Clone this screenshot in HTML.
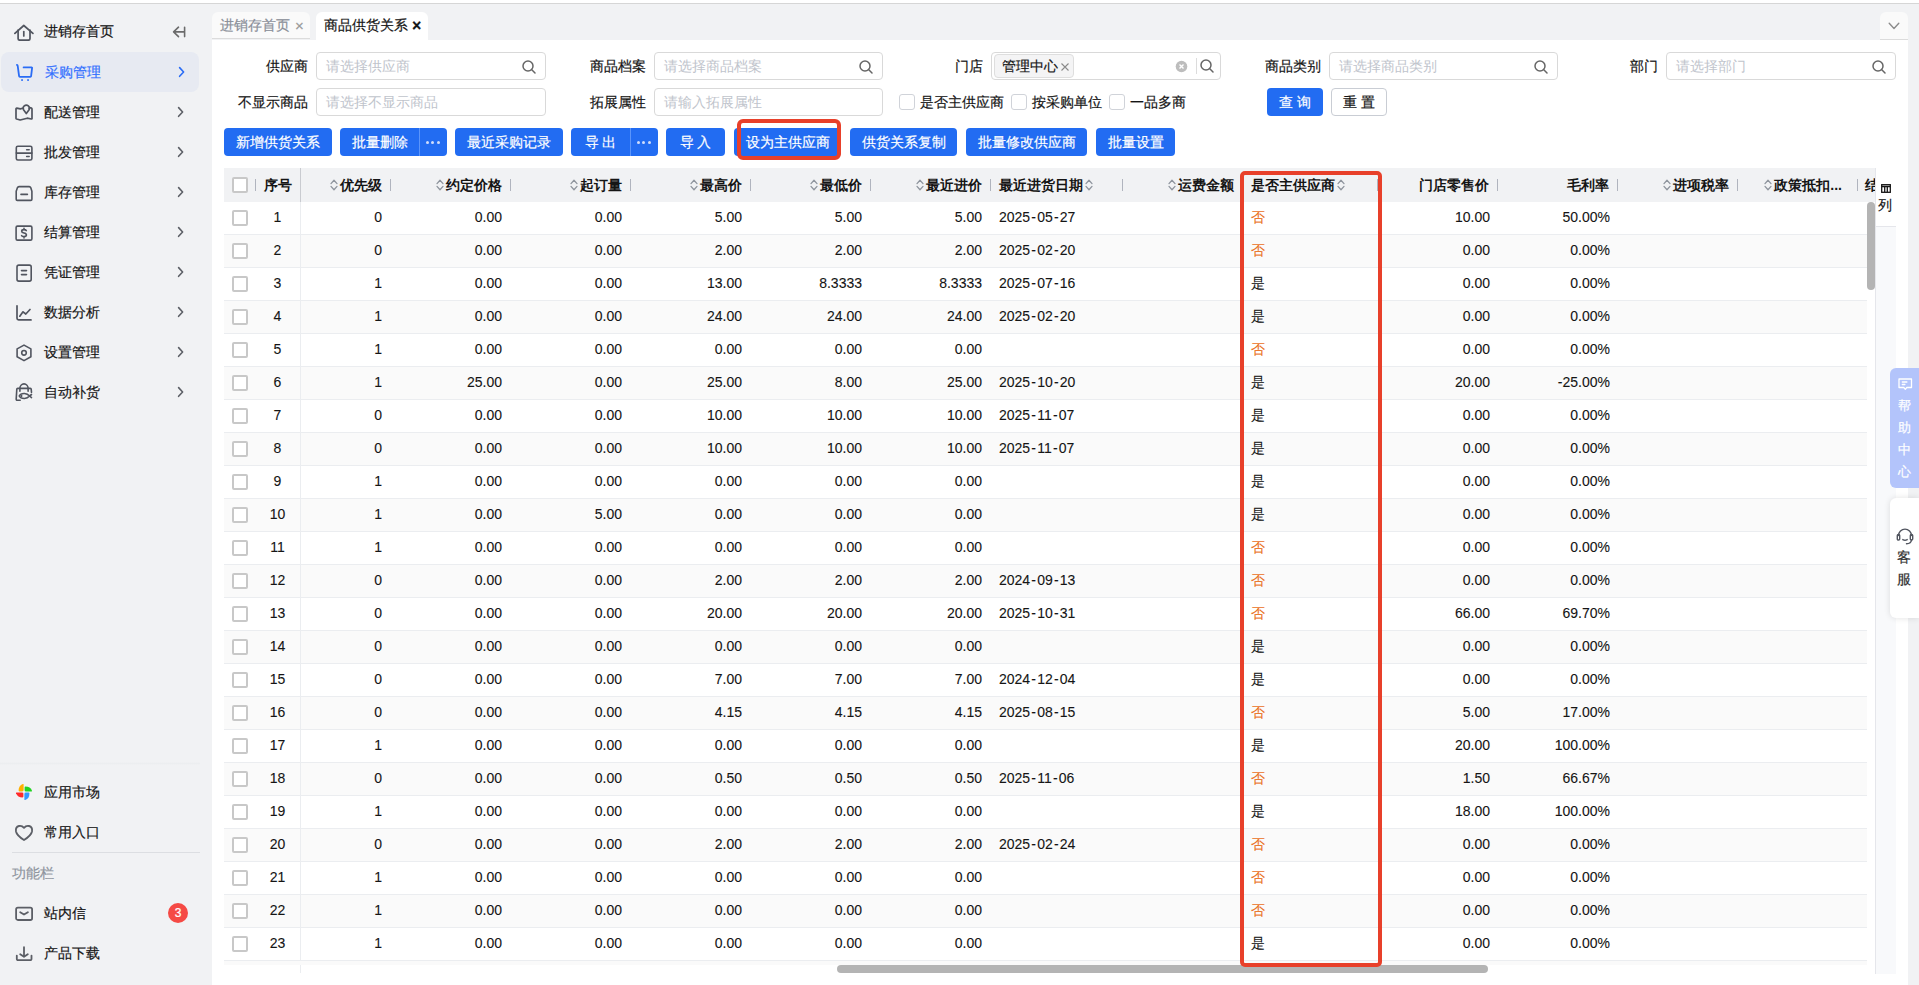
<!DOCTYPE html><html><head><meta charset="utf-8"><style>
*{margin:0;padding:0;box-sizing:border-box}
html,body{width:1919px;height:985px;overflow:hidden}
body{background:#f1f2f4;font-family:"Liberation Sans",sans-serif;font-size:14px;color:#151515;position:relative;-webkit-text-stroke:0.2px}
.a{position:absolute}
.topline{left:0;top:0;width:1919px;height:3px;background:#fff;border-bottom:1px solid #d6d6d6;height:4px}
.nav{left:0;height:40px;width:200px}
.nav .ic{position:absolute;left:14px;top:10px;width:20px;height:20px}
.nav .tx{position:absolute;left:44px;top:0;line-height:40px;font-size:14px;color:#151515;white-space:nowrap}
.nav .ar{position:absolute;left:175px;top:14px;width:12px;height:12px}
.nav.act{background:#e7eaf2;border-radius:8px;left:1px;width:198px}
.nav.act .tx{color:#3370ff}
.panel{left:212px;top:40px;width:1696px;height:945px;background:#fff}
.tab{top:12px;height:27px;border-radius:6px 6px 0 0;white-space:nowrap;line-height:27px;font-size:14px}
.lbl{font-size:14px;color:#151515;text-align:right;line-height:28px;height:28px;white-space:nowrap}
.inp{height:28px;border:1px solid #d9d9d9;border-radius:4px;background:#fff}
.ph{position:absolute;left:9px;top:0;line-height:26px;color:#c0c4cc;font-size:14px;white-space:nowrap;-webkit-text-stroke:0}
.srch{position:absolute;right:9px;top:7px;width:14px;height:14px}
.cb{width:16px;height:16px;border:1px solid #d0d3d9;border-radius:3px;background:#fff}
.tcb{width:16px;height:16px;border:2px solid #c8c8c8;border-radius:2px;background:#fff}
.btn{top:128px;height:28px;background:#226cf2;border-radius:4px;color:#fff;font-size:14px;line-height:28px;text-align:center;white-space:nowrap}
.thd{left:224px;top:168px;width:1652px;height:34px;background:#f1f2f4}
.th{top:168px;height:34px;line-height:34px;font-weight:bold;font-size:14px;color:#151515;white-space:nowrap;-webkit-text-stroke:0}
.sep{top:179px;width:1px;height:12px;background:#b0b4be}
.row{left:224px;width:1643px;height:33px;border-bottom:1px solid #ebedf0}
.td{height:33px;line-height:31px;font-size:14px;color:#151515;white-space:nowrap;-webkit-text-stroke:0.1px}
.no{color:#ea6f1a}
.hy{margin:0 1.2px}
.dot{top:12.5px;width:3px;height:3px;border-radius:2px;background:#d0ddfb}
</style></head><body><div class="a topline"></div>
<div class="a nav" style="top:11px"><svg class="ic" viewBox="0 0 20 20" fill="none" stroke="#51555f" stroke-width="1.7" stroke-linejoin="round" stroke-linecap="round"><path d="M0.9 12.4 L9.8 4.5 L18.9 12.4"/><path d="M4.1 9.2V17.6a1.6 1.6 0 0 0 1.6 1.6H14.4a1.6 1.6 0 0 0 1.6-1.6V9.2"/><path d="M9.8 10.6v4.4"/></svg><div class="tx">进销存首页</div><svg class="ar" style="left:172px;top:13px;width:16px;height:16px" viewBox="0 0 16 16" fill="none" stroke="#6b6b6b" stroke-width="1.6" stroke-linecap="round" stroke-linejoin="round"><path d="M12.6 3.2v9.4M12.2 7.9H1.8M6.5 3.2 L1.6 7.9 L6.5 12.6"/></svg></div>
<div class="a nav act" style="top:52px"><svg class="ic" viewBox="0 0 20 20" fill="none" stroke="#2a6cf5" stroke-width="1.8" stroke-linejoin="round" stroke-linecap="round"><path d="M1.9 2.9 Q2.6 3 2.7 3.8 L4.1 14.2 Q4.2 14.9 4.9 14.9 L15.3 14.8 Q16 14.8 16.1 14.1 L17.1 5.9 Q17.2 5.4 16.6 5.4 H8.6"/><rect x="6.2" y="17.2" width="1.7" height="1.7" fill="#2a6cf5" stroke="none"/><rect x="12.2" y="17.2" width="1.7" height="1.7" fill="#2a6cf5" stroke="none"/></svg><div class="tx">采购管理</div><svg class="ar" viewBox="0 0 12 12" fill="none" stroke="#2a6cf5" stroke-width="1.6" stroke-linecap="round" stroke-linejoin="round"><path d="M3.6 1.6 L7.6 6 L3.6 10.3"/></svg></div>
<div class="a nav" style="top:92px"><svg class="ic" viewBox="0 0 20 20" fill="none" stroke="#51555f" stroke-width="1.7" stroke-linejoin="round" stroke-linecap="round"><path d="M8.6 6.3 L6.3 6.9 L2.8 6.2 Q2 6.1 2 6.9 V16.3 Q2 16.8 2.6 17 L6.2 18 L13.2 16.2 L17.3 17 Q18 17.1 18 16.4 V6.9 Q18 6.4 17.4 6.1 L16.4 5.7 Q15.6 5.4 15.2 6.2"/><path d="M12.3 11.5 L9.7 8 A3.1 3.1 0 1 1 14.9 8 Z"/></svg><div class="tx">配送管理</div><svg class="ar" viewBox="0 0 12 12" fill="none" stroke="#5c5f66" stroke-width="1.6" stroke-linecap="round" stroke-linejoin="round"><path d="M3.6 1.6 L7.6 6 L3.6 10.3"/></svg></div>
<div class="a nav" style="top:132px"><svg class="ic" viewBox="0 0 20 20" fill="none" stroke="#51555f" stroke-width="1.6" stroke-linejoin="round" stroke-linecap="round"><rect x="2.3" y="4.2" width="15.6" height="13.8" rx="1.6"/><path d="M2.3 11.1h15.6"/><path d="M12.6 7.8h2.6M12.6 14.6h2.6" stroke-width="1.5"/></svg><div class="tx">批发管理</div><svg class="ar" viewBox="0 0 12 12" fill="none" stroke="#5c5f66" stroke-width="1.6" stroke-linecap="round" stroke-linejoin="round"><path d="M3.6 1.6 L7.6 6 L3.6 10.3"/></svg></div>
<div class="a nav" style="top:172px"><svg class="ic" viewBox="0 0 20 20" fill="none" stroke="#51555f" stroke-width="1.6" stroke-linejoin="round" stroke-linecap="round"><path d="M5 4.6 H15.3 Q16.3 4.6 16.7 5.6 L17.9 9.2 V17.3 Q17.9 18.4 16.8 18.4 H3.3 Q2.2 18.4 2.2 17.3 V9.2 L3.5 5.6 Q3.9 4.6 5 4.6Z"/><path d="M7 12.4h6.4"/></svg><div class="tx">库存管理</div><svg class="ar" viewBox="0 0 12 12" fill="none" stroke="#5c5f66" stroke-width="1.6" stroke-linecap="round" stroke-linejoin="round"><path d="M3.6 1.6 L7.6 6 L3.6 10.3"/></svg></div>
<div class="a nav" style="top:212px"><svg class="ic" viewBox="0 0 20 20" fill="none" stroke="#51555f" stroke-width="1.6" stroke-linejoin="round" stroke-linecap="round"><rect x="2.1" y="4.1" width="15.8" height="14" rx="1.4"/><path d="M12.3 8.6 Q11.8 7.6 10 7.6 Q7.7 7.6 7.7 9.2 Q7.7 10.6 10 11 Q12.4 11.4 12.4 13 Q12.4 14.6 10 14.6 Q8.1 14.6 7.6 13.6 M10 6.2 V7.6 M10 14.6 V16"/></svg><div class="tx">结算管理</div><svg class="ar" viewBox="0 0 12 12" fill="none" stroke="#5c5f66" stroke-width="1.6" stroke-linecap="round" stroke-linejoin="round"><path d="M3.6 1.6 L7.6 6 L3.6 10.3"/></svg></div>
<div class="a nav" style="top:252px"><svg class="ic" viewBox="0 0 20 20" fill="none" stroke="#51555f" stroke-width="1.6" stroke-linejoin="round" stroke-linecap="round"><rect x="3" y="3.1" width="14.2" height="16" rx="1.8"/><path d="M7.5 8.6h5M7.5 12.6h5"/></svg><div class="tx">凭证管理</div><svg class="ar" viewBox="0 0 12 12" fill="none" stroke="#5c5f66" stroke-width="1.6" stroke-linecap="round" stroke-linejoin="round"><path d="M3.6 1.6 L7.6 6 L3.6 10.3"/></svg></div>
<div class="a nav" style="top:292px"><svg class="ic" viewBox="0 0 20 20" fill="none" stroke="#51555f" stroke-width="1.7" stroke-linejoin="round" stroke-linecap="round"><path d="M3 3.8V16.3a1.6 1.6 0 0 0 1.6 1.6H17"/><path d="M5.8 14.2 L9 9.8 L11.8 12 L16 7.5"/></svg><div class="tx">数据分析</div><svg class="ar" viewBox="0 0 12 12" fill="none" stroke="#5c5f66" stroke-width="1.6" stroke-linecap="round" stroke-linejoin="round"><path d="M3.6 1.6 L7.6 6 L3.6 10.3"/></svg></div>
<div class="a nav" style="top:332px"><svg class="ic" viewBox="0 0 20 20" fill="none" stroke="#51555f" stroke-width="1.6" stroke-linejoin="round"><path d="M10 3.1 L16.9 6.9 V14.8 L10 18.6 L3.1 14.8 V6.9 Z"/><circle cx="10" cy="10.8" r="2.3"/></svg><div class="tx">设置管理</div><svg class="ar" viewBox="0 0 12 12" fill="none" stroke="#5c5f66" stroke-width="1.6" stroke-linecap="round" stroke-linejoin="round"><path d="M3.6 1.6 L7.6 6 L3.6 10.3"/></svg></div>
<div class="a nav" style="top:372px"><svg class="ic" viewBox="0 0 20 20" fill="none" stroke="#51555f" stroke-width="1.6" stroke-linejoin="round" stroke-linecap="round"><path d="M5.9 9.3V6.3a4.1 4.4 0 0 1 8.2 0V9.3"/><path d="M6.2 18.2H3.2Q2.1 18.2 2.2 17.1L2.8 7.2Q2.9 6.4 3.7 6.4H16.3Q17.1 6.4 17.2 7.2L17.5 10.4"/><path d="M15.6 14 Q13.5 11.8 10.5 11.5 Q6.5 11.3 5.2 14 Q6.5 16.6 10.5 16.5 Q13.5 16.2 15.6 14 Z M15.6 14 L17.5 12.5 M15.6 14 L17.5 15.6"/><path d="M7.5 13.5v1"/></svg><div class="tx">自动补货</div><svg class="ar" viewBox="0 0 12 12" fill="none" stroke="#5c5f66" stroke-width="1.6" stroke-linecap="round" stroke-linejoin="round"><path d="M3.6 1.6 L7.6 6 L3.6 10.3"/></svg></div>
<div class="a" style="left:0;top:762px;width:200px;height:3px;background:linear-gradient(#f1f2f4,#eceef0,#f1f2f4)"></div>
<div class="a nav" style="top:772px"><svg class="ic" viewBox="0 0 20 20"><g id="pt"><path d="M9.6 8 V2.6 Q9.6 1.7 8.8 2 Q4.6 3.6 4.6 8.6 Q4.6 9.4 5.4 9.4 H8.2 Q9.6 9.4 9.6 8 Z" fill="#ffb000"/></g><path d="M9.6 8 V2.6 Q9.6 1.7 8.8 2 Q4.6 3.6 4.6 8.6 Q4.6 9.4 5.4 9.4 H8.2 Q9.6 9.4 9.6 8 Z" fill="#22d322" transform="rotate(90 10 10)"/><path d="M9.6 8 V2.6 Q9.6 1.7 8.8 2 Q4.6 3.6 4.6 8.6 Q4.6 9.4 5.4 9.4 H8.2 Q9.6 9.4 9.6 8 Z" fill="#3399ff" transform="rotate(180 10 10)"/><path d="M9.6 8 V2.6 Q9.6 1.7 8.8 2 Q4.6 3.6 4.6 8.6 Q4.6 9.4 5.4 9.4 H8.2 Q9.6 9.4 9.6 8 Z" fill="#ff2a2a" transform="rotate(270 10 10)"/></svg><div class="tx">应用市场</div></div>
<div class="a nav" style="top:812px"><svg class="ic" viewBox="0 0 20 20" fill="none" stroke="#5c5f66" stroke-width="1.8" stroke-linejoin="round"><path d="M10 5.8 C8.5 4 6.5 3.7 5 4 C2.5 4.6 1.6 7 2 9.5 C2.6 12.5 6 15.5 10 18 C14 15.5 17.4 12.5 18 9.5 C18.4 7 17.5 4.6 15 4 C13.5 3.7 11.5 4 10 5.8Z"/></svg><div class="tx">常用入口</div></div>
<div class="a" style="left:12px;top:852px;width:188px;height:1px;background:#dcdee2"></div>
<div class="a" style="left:12px;top:863px;line-height:20px;font-size:14px;color:#8f959e">功能栏</div>
<div class="a nav" style="top:893px"><svg class="ic" viewBox="0 0 20 20" fill="none" stroke="#5c5f66" stroke-width="1.8" stroke-linejoin="round"><rect x="2.1" y="4.6" width="16" height="12.4" rx="1.8"/><path d="M6.2 9.2 L10 11.6 L13.9 9.2" stroke-linecap="round"/></svg><div class="tx">站内信</div><div class="a" style="left:168px;top:10px;width:20px;height:20px;border-radius:10px;background:#f54a45;color:#fff;font-size:12px;line-height:20px;text-align:center">3</div></div>
<div class="a nav" style="top:933px"><svg class="ic" viewBox="0 0 20 20" fill="none" stroke="#5c5f66" stroke-width="1.8" stroke-linejoin="round" stroke-linecap="round"><path d="M10 4.2v9.4M6.2 11.2l3.8 2.6 3.8-2.6"/><path d="M2.8 12.6v3.4a1.2 1.2 0 0 0 1.2 1.2h12.3a1.2 1.2 0 0 0 1.2-1.2v-3.4"/></svg><div class="tx">产品下载</div></div>
<div class="a panel"></div>
<div class="a tab" style="left:212px;width:98px;background:#fafafa;border-bottom:1px solid #dcdcdc;color:#8a8f99"><span class="a" style="left:8px;top:0">进销存首页</span><span class="a" style="left:83px;top:0;font-size:15px;color:#999">×</span></div>
<div class="a tab" style="left:316px;width:112px;height:28px;background:#fff;color:#151515"><span class="a" style="left:8px;top:0">商品供货关系</span><span class="a" style="left:96px;top:0;font-size:16px;font-weight:bold;color:#151515">×</span></div>
<div class="a tab" style="left:1880px;width:28px;height:28px;background:#fafafa;border-bottom:1px solid #dcdcdc"><svg class="a" style="left:8px;top:10px" width="12" height="8" viewBox="0 0 12 8" fill="none" stroke="#8c8c8c" stroke-width="1.4" stroke-linecap="round" stroke-linejoin="round"><path d="M1.2 1.3 L6 6.4 L10.8 1.3"/></svg></div>
<div class="a lbl" style="left:108px;top:52px;width:200px">供应商</div>
<div class="a inp" style="left:316px;top:52px;width:230px"><span class="ph">请选择供应商</span><svg class="srch" viewBox="0 0 14 14" fill="none" stroke="#666" stroke-width="1.5" stroke-linecap="round"><circle cx="6" cy="6" r="5"/><path d="M9.8 9.8 L13 13"/></svg></div>
<div class="a lbl" style="left:446px;top:52px;width:200px">商品档案</div>
<div class="a inp" style="left:654px;top:52px;width:229px"><span class="ph">请选择商品档案</span><svg class="srch" viewBox="0 0 14 14" fill="none" stroke="#666" stroke-width="1.5" stroke-linecap="round"><circle cx="6" cy="6" r="5"/><path d="M9.8 9.8 L13 13"/></svg></div>
<div class="a lbl" style="left:1121px;top:52px;width:200px">商品类别</div>
<div class="a inp" style="left:1329px;top:52px;width:229px"><span class="ph">请选择商品类别</span><svg class="srch" viewBox="0 0 14 14" fill="none" stroke="#666" stroke-width="1.5" stroke-linecap="round"><circle cx="6" cy="6" r="5"/><path d="M9.8 9.8 L13 13"/></svg></div>
<div class="a lbl" style="left:1458px;top:52px;width:200px">部门</div>
<div class="a inp" style="left:1666px;top:52px;width:230px"><span class="ph">请选择部门</span><svg class="srch" viewBox="0 0 14 14" fill="none" stroke="#666" stroke-width="1.5" stroke-linecap="round"><circle cx="6" cy="6" r="5"/><path d="M9.8 9.8 L13 13"/></svg></div>
<div class="a lbl" style="left:108px;top:88px;width:200px">不显示商品</div>
<div class="a inp" style="left:316px;top:88px;width:230px"><span class="ph">请选择不显示商品</span></div>
<div class="a lbl" style="left:446px;top:88px;width:200px">拓展属性</div>
<div class="a inp" style="left:654px;top:88px;width:229px"><span class="ph">请输入拓展属性</span></div>
<div class="a lbl" style="left:783px;top:52px;width:200px">门店</div>
<div class="a inp" style="left:991px;top:52px;width:230px"><div class="a" style="left:2px;top:1px;width:80px;height:24px;background:#f4f4f5;border:1px solid #dedede;border-radius:4px;line-height:22px;font-size:14px;color:#151515;padding-left:7px;white-space:nowrap">管理中心<svg style="position:absolute;left:66px;top:8px" width="8" height="8" viewBox="0 0 8 8" stroke="#8a8a8a" stroke-width="1.1"><path d="M.5 .5 L7.5 7.5 M7.5 .5 L.5 7.5"/></svg></div><svg class="a" style="left:183px;top:7px" width="13" height="13" viewBox="0 0 13 13"><circle cx="6.5" cy="6.5" r="5.8" fill="#bdbdbd"/><path d="M4.5 4.5 L8.5 8.5 M8.5 4.5 L4.5 8.5" stroke="#fff" stroke-width="1.4"/></svg><div class="a" style="left:204px;top:5px;width:1px;height:16px;background:#dcdcdc"></div><svg class="srch" style="right:6px;top:6px" viewBox="0 0 14 14" fill="none" stroke="#666" stroke-width="1.5" stroke-linecap="round"><circle cx="6" cy="6" r="5"/><path d="M9.8 9.8 L13 13"/></svg></div>
<div class="a cb" style="left:899px;top:94px"></div><div class="a" style="left:920px;top:92px;line-height:20px;white-space:nowrap">是否主供应商</div>
<div class="a cb" style="left:1011px;top:94px"></div><div class="a" style="left:1032px;top:92px;line-height:20px;white-space:nowrap">按采购单位</div>
<div class="a cb" style="left:1109px;top:94px"></div><div class="a" style="left:1130px;top:92px;line-height:20px;white-space:nowrap">一品多商</div>
<div class="a btn" style="left:1267px;top:88px;width:56px;letter-spacing:4px;padding-left:4px">查询</div>
<div class="a btn" style="left:1331px;top:88px;width:56px;background:#fff;border:1px solid #c9cdd4;color:#151515;line-height:26px;letter-spacing:4px;padding-left:4px">重置</div>
<div class="a btn" style="left:224px;width:108px">新增供货关系</div>
<div class="a btn" style="left:340px;width:107px"><span class="a" style="left:0;top:0;width:79px">批量删除</span><span class="a" style="left:79px;top:0;width:1px;height:28px;background:#5b95fb"></span><span class="a dot" style="left:86px"></span><span class="a dot" style="left:91.3px"></span><span class="a dot" style="left:96.5px"></span></div>
<div class="a btn" style="left:455px;width:108px">最近采购记录</div>
<div class="a btn" style="left:571px;width:87px"><span class="a" style="left:0;top:0;width:59px">导 出</span><span class="a" style="left:59px;top:0;width:1px;height:28px;background:#5b95fb"></span><span class="a dot" style="left:66px"></span><span class="a dot" style="left:71.3px"></span><span class="a dot" style="left:76.5px"></span></div>
<div class="a btn" style="left:666px;width:59px">导 入</div>
<div class="a btn" style="left:734px;width:107px">设为主供应商</div>
<div class="a btn" style="left:850px;width:107px">供货关系复制</div>
<div class="a btn" style="left:966px;width:121px">批量修改供应商</div>
<div class="a btn" style="left:1096px;width:79px">批量设置</div>
<div class="a thd"></div>
<div class="a tcb" style="left:232px;top:177px"></div><div class="a sep" style="left:255px"></div><div class="a th" style="left:255px;width:45px;text-align:center">序号</div><div class="a th" style="left:300px;width:82px;text-align:right"><svg width="8" height="12" viewBox="0 0 8 12" fill="none" stroke="#8f959e" stroke-width="1.3" stroke-linecap="round" stroke-linejoin="round" style="vertical-align:-1px;margin-right:2.5px"><path d="M1 4.6 L4 1.2 L7 4.6M1 7.4 L4 10.8 L7 7.4"/></svg>优先级</div><div class="a sep" style="left:390px"></div><div class="a th" style="left:390px;width:112px;text-align:right"><svg width="8" height="12" viewBox="0 0 8 12" fill="none" stroke="#8f959e" stroke-width="1.3" stroke-linecap="round" stroke-linejoin="round" style="vertical-align:-1px;margin-right:2.5px"><path d="M1 4.6 L4 1.2 L7 4.6M1 7.4 L4 10.8 L7 7.4"/></svg>约定价格</div><div class="a sep" style="left:510px"></div><div class="a th" style="left:510px;width:112px;text-align:right"><svg width="8" height="12" viewBox="0 0 8 12" fill="none" stroke="#8f959e" stroke-width="1.3" stroke-linecap="round" stroke-linejoin="round" style="vertical-align:-1px;margin-right:2.5px"><path d="M1 4.6 L4 1.2 L7 4.6M1 7.4 L4 10.8 L7 7.4"/></svg>起订量</div><div class="a sep" style="left:630px"></div><div class="a th" style="left:630px;width:112px;text-align:right"><svg width="8" height="12" viewBox="0 0 8 12" fill="none" stroke="#8f959e" stroke-width="1.3" stroke-linecap="round" stroke-linejoin="round" style="vertical-align:-1px;margin-right:2.5px"><path d="M1 4.6 L4 1.2 L7 4.6M1 7.4 L4 10.8 L7 7.4"/></svg>最高价</div><div class="a sep" style="left:750px"></div><div class="a th" style="left:750px;width:112px;text-align:right"><svg width="8" height="12" viewBox="0 0 8 12" fill="none" stroke="#8f959e" stroke-width="1.3" stroke-linecap="round" stroke-linejoin="round" style="vertical-align:-1px;margin-right:2.5px"><path d="M1 4.6 L4 1.2 L7 4.6M1 7.4 L4 10.8 L7 7.4"/></svg>最低价</div><div class="a sep" style="left:870px"></div><div class="a th" style="left:870px;width:112px;text-align:right"><svg width="8" height="12" viewBox="0 0 8 12" fill="none" stroke="#8f959e" stroke-width="1.3" stroke-linecap="round" stroke-linejoin="round" style="vertical-align:-1px;margin-right:2.5px"><path d="M1 4.6 L4 1.2 L7 4.6M1 7.4 L4 10.8 L7 7.4"/></svg>最近进价</div><div class="a sep" style="left:990px"></div><div class="a th" style="left:999px;width:123px;text-align:left">最近进货日期<svg width="8" height="12" viewBox="0 0 8 12" fill="none" stroke="#8f959e" stroke-width="1.3" stroke-linecap="round" stroke-linejoin="round" style="vertical-align:-1px;margin-left:2px"><path d="M1 4.6 L4 1.2 L7 4.6M1 7.4 L4 10.8 L7 7.4"/></svg></div><div class="a sep" style="left:1122px"></div><div class="a th" style="left:1122px;width:112px;text-align:right"><svg width="8" height="12" viewBox="0 0 8 12" fill="none" stroke="#8f959e" stroke-width="1.3" stroke-linecap="round" stroke-linejoin="round" style="vertical-align:-1px;margin-right:2.5px"><path d="M1 4.6 L4 1.2 L7 4.6M1 7.4 L4 10.8 L7 7.4"/></svg>运费金额</div><div class="a sep" style="left:1242px"></div><div class="a th" style="left:1251px;width:126px;text-align:left">是否主供应商<svg width="8" height="12" viewBox="0 0 8 12" fill="none" stroke="#8f959e" stroke-width="1.3" stroke-linecap="round" stroke-linejoin="round" style="vertical-align:-1px;margin-left:2px"><path d="M1 4.6 L4 1.2 L7 4.6M1 7.4 L4 10.8 L7 7.4"/></svg></div><div class="a sep" style="left:1377px"></div><div class="a th" style="left:1377px;width:112px;text-align:right">门店零售价</div><div class="a sep" style="left:1497px"></div><div class="a th" style="left:1497px;width:112px;text-align:right">毛利率</div><div class="a sep" style="left:1617px"></div><div class="a th" style="left:1617px;width:112px;text-align:right"><svg width="8" height="12" viewBox="0 0 8 12" fill="none" stroke="#8f959e" stroke-width="1.3" stroke-linecap="round" stroke-linejoin="round" style="vertical-align:-1px;margin-right:2.5px"><path d="M1 4.6 L4 1.2 L7 4.6M1 7.4 L4 10.8 L7 7.4"/></svg>进项税率</div><div class="a sep" style="left:1737px"></div><div class="a th" style="left:1737px;width:105px;text-align:right"><svg width="8" height="12" viewBox="0 0 8 12" fill="none" stroke="#8f959e" stroke-width="1.3" stroke-linecap="round" stroke-linejoin="round" style="vertical-align:-1px;margin-right:2.5px"><path d="M1 4.6 L4 1.2 L7 4.6M1 7.4 L4 10.8 L7 7.4"/></svg>政策抵扣...</div><div class="a sep" style="left:1857px"></div><div class="a th" style="left:1857px;width:18px;padding-left:8px;overflow:hidden">结算方式</div>
<div class="a" style="left:300px;top:168px;width:1px;height:34px;background:#c9cbd0"></div>
<div class="a row" style="top:202px;background:#fff"></div><div class="a tcb" style="left:232px;top:210px"></div><div class="a td" style="left:255px;top:202px;width:45px;text-align:center">1</div><div class="a td" style="left:300px;top:202px;width:82px;text-align:right">0</div><div class="a td" style="left:390px;top:202px;width:112px;text-align:right">0.00</div><div class="a td" style="left:510px;top:202px;width:112px;text-align:right">0.00</div><div class="a td" style="left:630px;top:202px;width:112px;text-align:right">5.00</div><div class="a td" style="left:750px;top:202px;width:112px;text-align:right">5.00</div><div class="a td" style="left:870px;top:202px;width:112px;text-align:right">5.00</div><div class="a td" style="left:999px;top:202px">2025<span class="hy">-</span>05<span class="hy">-</span>27</div><div class="a td no" style="left:1251px;top:202px">否</div><div class="a td" style="left:1377px;top:202px;width:113px;text-align:right">10.00</div><div class="a td" style="left:1497px;top:202px;width:113px;text-align:right">50.00%</div><div class="a row" style="top:235px;background:#fafafa"></div><div class="a tcb" style="left:232px;top:243px"></div><div class="a td" style="left:255px;top:235px;width:45px;text-align:center">2</div><div class="a td" style="left:300px;top:235px;width:82px;text-align:right">0</div><div class="a td" style="left:390px;top:235px;width:112px;text-align:right">0.00</div><div class="a td" style="left:510px;top:235px;width:112px;text-align:right">0.00</div><div class="a td" style="left:630px;top:235px;width:112px;text-align:right">2.00</div><div class="a td" style="left:750px;top:235px;width:112px;text-align:right">2.00</div><div class="a td" style="left:870px;top:235px;width:112px;text-align:right">2.00</div><div class="a td" style="left:999px;top:235px">2025<span class="hy">-</span>02<span class="hy">-</span>20</div><div class="a td no" style="left:1251px;top:235px">否</div><div class="a td" style="left:1377px;top:235px;width:113px;text-align:right">0.00</div><div class="a td" style="left:1497px;top:235px;width:113px;text-align:right">0.00%</div><div class="a row" style="top:268px;background:#fff"></div><div class="a tcb" style="left:232px;top:276px"></div><div class="a td" style="left:255px;top:268px;width:45px;text-align:center">3</div><div class="a td" style="left:300px;top:268px;width:82px;text-align:right">1</div><div class="a td" style="left:390px;top:268px;width:112px;text-align:right">0.00</div><div class="a td" style="left:510px;top:268px;width:112px;text-align:right">0.00</div><div class="a td" style="left:630px;top:268px;width:112px;text-align:right">13.00</div><div class="a td" style="left:750px;top:268px;width:112px;text-align:right">8.3333</div><div class="a td" style="left:870px;top:268px;width:112px;text-align:right">8.3333</div><div class="a td" style="left:999px;top:268px">2025<span class="hy">-</span>07<span class="hy">-</span>16</div><div class="a td" style="left:1251px;top:268px">是</div><div class="a td" style="left:1377px;top:268px;width:113px;text-align:right">0.00</div><div class="a td" style="left:1497px;top:268px;width:113px;text-align:right">0.00%</div><div class="a row" style="top:301px;background:#fafafa"></div><div class="a tcb" style="left:232px;top:309px"></div><div class="a td" style="left:255px;top:301px;width:45px;text-align:center">4</div><div class="a td" style="left:300px;top:301px;width:82px;text-align:right">1</div><div class="a td" style="left:390px;top:301px;width:112px;text-align:right">0.00</div><div class="a td" style="left:510px;top:301px;width:112px;text-align:right">0.00</div><div class="a td" style="left:630px;top:301px;width:112px;text-align:right">24.00</div><div class="a td" style="left:750px;top:301px;width:112px;text-align:right">24.00</div><div class="a td" style="left:870px;top:301px;width:112px;text-align:right">24.00</div><div class="a td" style="left:999px;top:301px">2025<span class="hy">-</span>02<span class="hy">-</span>20</div><div class="a td" style="left:1251px;top:301px">是</div><div class="a td" style="left:1377px;top:301px;width:113px;text-align:right">0.00</div><div class="a td" style="left:1497px;top:301px;width:113px;text-align:right">0.00%</div><div class="a row" style="top:334px;background:#fff"></div><div class="a tcb" style="left:232px;top:342px"></div><div class="a td" style="left:255px;top:334px;width:45px;text-align:center">5</div><div class="a td" style="left:300px;top:334px;width:82px;text-align:right">1</div><div class="a td" style="left:390px;top:334px;width:112px;text-align:right">0.00</div><div class="a td" style="left:510px;top:334px;width:112px;text-align:right">0.00</div><div class="a td" style="left:630px;top:334px;width:112px;text-align:right">0.00</div><div class="a td" style="left:750px;top:334px;width:112px;text-align:right">0.00</div><div class="a td" style="left:870px;top:334px;width:112px;text-align:right">0.00</div><div class="a td no" style="left:1251px;top:334px">否</div><div class="a td" style="left:1377px;top:334px;width:113px;text-align:right">0.00</div><div class="a td" style="left:1497px;top:334px;width:113px;text-align:right">0.00%</div><div class="a row" style="top:367px;background:#fafafa"></div><div class="a tcb" style="left:232px;top:375px"></div><div class="a td" style="left:255px;top:367px;width:45px;text-align:center">6</div><div class="a td" style="left:300px;top:367px;width:82px;text-align:right">1</div><div class="a td" style="left:390px;top:367px;width:112px;text-align:right">25.00</div><div class="a td" style="left:510px;top:367px;width:112px;text-align:right">0.00</div><div class="a td" style="left:630px;top:367px;width:112px;text-align:right">25.00</div><div class="a td" style="left:750px;top:367px;width:112px;text-align:right">8.00</div><div class="a td" style="left:870px;top:367px;width:112px;text-align:right">25.00</div><div class="a td" style="left:999px;top:367px">2025<span class="hy">-</span>10<span class="hy">-</span>20</div><div class="a td" style="left:1251px;top:367px">是</div><div class="a td" style="left:1377px;top:367px;width:113px;text-align:right">20.00</div><div class="a td" style="left:1497px;top:367px;width:113px;text-align:right">-25.00%</div><div class="a row" style="top:400px;background:#fff"></div><div class="a tcb" style="left:232px;top:408px"></div><div class="a td" style="left:255px;top:400px;width:45px;text-align:center">7</div><div class="a td" style="left:300px;top:400px;width:82px;text-align:right">0</div><div class="a td" style="left:390px;top:400px;width:112px;text-align:right">0.00</div><div class="a td" style="left:510px;top:400px;width:112px;text-align:right">0.00</div><div class="a td" style="left:630px;top:400px;width:112px;text-align:right">10.00</div><div class="a td" style="left:750px;top:400px;width:112px;text-align:right">10.00</div><div class="a td" style="left:870px;top:400px;width:112px;text-align:right">10.00</div><div class="a td" style="left:999px;top:400px">2025<span class="hy">-</span>11<span class="hy">-</span>07</div><div class="a td" style="left:1251px;top:400px">是</div><div class="a td" style="left:1377px;top:400px;width:113px;text-align:right">0.00</div><div class="a td" style="left:1497px;top:400px;width:113px;text-align:right">0.00%</div><div class="a row" style="top:433px;background:#fafafa"></div><div class="a tcb" style="left:232px;top:441px"></div><div class="a td" style="left:255px;top:433px;width:45px;text-align:center">8</div><div class="a td" style="left:300px;top:433px;width:82px;text-align:right">0</div><div class="a td" style="left:390px;top:433px;width:112px;text-align:right">0.00</div><div class="a td" style="left:510px;top:433px;width:112px;text-align:right">0.00</div><div class="a td" style="left:630px;top:433px;width:112px;text-align:right">10.00</div><div class="a td" style="left:750px;top:433px;width:112px;text-align:right">10.00</div><div class="a td" style="left:870px;top:433px;width:112px;text-align:right">10.00</div><div class="a td" style="left:999px;top:433px">2025<span class="hy">-</span>11<span class="hy">-</span>07</div><div class="a td" style="left:1251px;top:433px">是</div><div class="a td" style="left:1377px;top:433px;width:113px;text-align:right">0.00</div><div class="a td" style="left:1497px;top:433px;width:113px;text-align:right">0.00%</div><div class="a row" style="top:466px;background:#fff"></div><div class="a tcb" style="left:232px;top:474px"></div><div class="a td" style="left:255px;top:466px;width:45px;text-align:center">9</div><div class="a td" style="left:300px;top:466px;width:82px;text-align:right">1</div><div class="a td" style="left:390px;top:466px;width:112px;text-align:right">0.00</div><div class="a td" style="left:510px;top:466px;width:112px;text-align:right">0.00</div><div class="a td" style="left:630px;top:466px;width:112px;text-align:right">0.00</div><div class="a td" style="left:750px;top:466px;width:112px;text-align:right">0.00</div><div class="a td" style="left:870px;top:466px;width:112px;text-align:right">0.00</div><div class="a td" style="left:1251px;top:466px">是</div><div class="a td" style="left:1377px;top:466px;width:113px;text-align:right">0.00</div><div class="a td" style="left:1497px;top:466px;width:113px;text-align:right">0.00%</div><div class="a row" style="top:499px;background:#fafafa"></div><div class="a tcb" style="left:232px;top:507px"></div><div class="a td" style="left:255px;top:499px;width:45px;text-align:center">10</div><div class="a td" style="left:300px;top:499px;width:82px;text-align:right">1</div><div class="a td" style="left:390px;top:499px;width:112px;text-align:right">0.00</div><div class="a td" style="left:510px;top:499px;width:112px;text-align:right">5.00</div><div class="a td" style="left:630px;top:499px;width:112px;text-align:right">0.00</div><div class="a td" style="left:750px;top:499px;width:112px;text-align:right">0.00</div><div class="a td" style="left:870px;top:499px;width:112px;text-align:right">0.00</div><div class="a td" style="left:1251px;top:499px">是</div><div class="a td" style="left:1377px;top:499px;width:113px;text-align:right">0.00</div><div class="a td" style="left:1497px;top:499px;width:113px;text-align:right">0.00%</div><div class="a row" style="top:532px;background:#fff"></div><div class="a tcb" style="left:232px;top:540px"></div><div class="a td" style="left:255px;top:532px;width:45px;text-align:center">11</div><div class="a td" style="left:300px;top:532px;width:82px;text-align:right">1</div><div class="a td" style="left:390px;top:532px;width:112px;text-align:right">0.00</div><div class="a td" style="left:510px;top:532px;width:112px;text-align:right">0.00</div><div class="a td" style="left:630px;top:532px;width:112px;text-align:right">0.00</div><div class="a td" style="left:750px;top:532px;width:112px;text-align:right">0.00</div><div class="a td" style="left:870px;top:532px;width:112px;text-align:right">0.00</div><div class="a td no" style="left:1251px;top:532px">否</div><div class="a td" style="left:1377px;top:532px;width:113px;text-align:right">0.00</div><div class="a td" style="left:1497px;top:532px;width:113px;text-align:right">0.00%</div><div class="a row" style="top:565px;background:#fafafa"></div><div class="a tcb" style="left:232px;top:573px"></div><div class="a td" style="left:255px;top:565px;width:45px;text-align:center">12</div><div class="a td" style="left:300px;top:565px;width:82px;text-align:right">0</div><div class="a td" style="left:390px;top:565px;width:112px;text-align:right">0.00</div><div class="a td" style="left:510px;top:565px;width:112px;text-align:right">0.00</div><div class="a td" style="left:630px;top:565px;width:112px;text-align:right">2.00</div><div class="a td" style="left:750px;top:565px;width:112px;text-align:right">2.00</div><div class="a td" style="left:870px;top:565px;width:112px;text-align:right">2.00</div><div class="a td" style="left:999px;top:565px">2024<span class="hy">-</span>09<span class="hy">-</span>13</div><div class="a td no" style="left:1251px;top:565px">否</div><div class="a td" style="left:1377px;top:565px;width:113px;text-align:right">0.00</div><div class="a td" style="left:1497px;top:565px;width:113px;text-align:right">0.00%</div><div class="a row" style="top:598px;background:#fff"></div><div class="a tcb" style="left:232px;top:606px"></div><div class="a td" style="left:255px;top:598px;width:45px;text-align:center">13</div><div class="a td" style="left:300px;top:598px;width:82px;text-align:right">0</div><div class="a td" style="left:390px;top:598px;width:112px;text-align:right">0.00</div><div class="a td" style="left:510px;top:598px;width:112px;text-align:right">0.00</div><div class="a td" style="left:630px;top:598px;width:112px;text-align:right">20.00</div><div class="a td" style="left:750px;top:598px;width:112px;text-align:right">20.00</div><div class="a td" style="left:870px;top:598px;width:112px;text-align:right">20.00</div><div class="a td" style="left:999px;top:598px">2025<span class="hy">-</span>10<span class="hy">-</span>31</div><div class="a td no" style="left:1251px;top:598px">否</div><div class="a td" style="left:1377px;top:598px;width:113px;text-align:right">66.00</div><div class="a td" style="left:1497px;top:598px;width:113px;text-align:right">69.70%</div><div class="a row" style="top:631px;background:#fafafa"></div><div class="a tcb" style="left:232px;top:639px"></div><div class="a td" style="left:255px;top:631px;width:45px;text-align:center">14</div><div class="a td" style="left:300px;top:631px;width:82px;text-align:right">0</div><div class="a td" style="left:390px;top:631px;width:112px;text-align:right">0.00</div><div class="a td" style="left:510px;top:631px;width:112px;text-align:right">0.00</div><div class="a td" style="left:630px;top:631px;width:112px;text-align:right">0.00</div><div class="a td" style="left:750px;top:631px;width:112px;text-align:right">0.00</div><div class="a td" style="left:870px;top:631px;width:112px;text-align:right">0.00</div><div class="a td" style="left:1251px;top:631px">是</div><div class="a td" style="left:1377px;top:631px;width:113px;text-align:right">0.00</div><div class="a td" style="left:1497px;top:631px;width:113px;text-align:right">0.00%</div><div class="a row" style="top:664px;background:#fff"></div><div class="a tcb" style="left:232px;top:672px"></div><div class="a td" style="left:255px;top:664px;width:45px;text-align:center">15</div><div class="a td" style="left:300px;top:664px;width:82px;text-align:right">0</div><div class="a td" style="left:390px;top:664px;width:112px;text-align:right">0.00</div><div class="a td" style="left:510px;top:664px;width:112px;text-align:right">0.00</div><div class="a td" style="left:630px;top:664px;width:112px;text-align:right">7.00</div><div class="a td" style="left:750px;top:664px;width:112px;text-align:right">7.00</div><div class="a td" style="left:870px;top:664px;width:112px;text-align:right">7.00</div><div class="a td" style="left:999px;top:664px">2024<span class="hy">-</span>12<span class="hy">-</span>04</div><div class="a td" style="left:1251px;top:664px">是</div><div class="a td" style="left:1377px;top:664px;width:113px;text-align:right">0.00</div><div class="a td" style="left:1497px;top:664px;width:113px;text-align:right">0.00%</div><div class="a row" style="top:697px;background:#fafafa"></div><div class="a tcb" style="left:232px;top:705px"></div><div class="a td" style="left:255px;top:697px;width:45px;text-align:center">16</div><div class="a td" style="left:300px;top:697px;width:82px;text-align:right">0</div><div class="a td" style="left:390px;top:697px;width:112px;text-align:right">0.00</div><div class="a td" style="left:510px;top:697px;width:112px;text-align:right">0.00</div><div class="a td" style="left:630px;top:697px;width:112px;text-align:right">4.15</div><div class="a td" style="left:750px;top:697px;width:112px;text-align:right">4.15</div><div class="a td" style="left:870px;top:697px;width:112px;text-align:right">4.15</div><div class="a td" style="left:999px;top:697px">2025<span class="hy">-</span>08<span class="hy">-</span>15</div><div class="a td no" style="left:1251px;top:697px">否</div><div class="a td" style="left:1377px;top:697px;width:113px;text-align:right">5.00</div><div class="a td" style="left:1497px;top:697px;width:113px;text-align:right">17.00%</div><div class="a row" style="top:730px;background:#fff"></div><div class="a tcb" style="left:232px;top:738px"></div><div class="a td" style="left:255px;top:730px;width:45px;text-align:center">17</div><div class="a td" style="left:300px;top:730px;width:82px;text-align:right">1</div><div class="a td" style="left:390px;top:730px;width:112px;text-align:right">0.00</div><div class="a td" style="left:510px;top:730px;width:112px;text-align:right">0.00</div><div class="a td" style="left:630px;top:730px;width:112px;text-align:right">0.00</div><div class="a td" style="left:750px;top:730px;width:112px;text-align:right">0.00</div><div class="a td" style="left:870px;top:730px;width:112px;text-align:right">0.00</div><div class="a td" style="left:1251px;top:730px">是</div><div class="a td" style="left:1377px;top:730px;width:113px;text-align:right">20.00</div><div class="a td" style="left:1497px;top:730px;width:113px;text-align:right">100.00%</div><div class="a row" style="top:763px;background:#fafafa"></div><div class="a tcb" style="left:232px;top:771px"></div><div class="a td" style="left:255px;top:763px;width:45px;text-align:center">18</div><div class="a td" style="left:300px;top:763px;width:82px;text-align:right">0</div><div class="a td" style="left:390px;top:763px;width:112px;text-align:right">0.00</div><div class="a td" style="left:510px;top:763px;width:112px;text-align:right">0.00</div><div class="a td" style="left:630px;top:763px;width:112px;text-align:right">0.50</div><div class="a td" style="left:750px;top:763px;width:112px;text-align:right">0.50</div><div class="a td" style="left:870px;top:763px;width:112px;text-align:right">0.50</div><div class="a td" style="left:999px;top:763px">2025<span class="hy">-</span>11<span class="hy">-</span>06</div><div class="a td no" style="left:1251px;top:763px">否</div><div class="a td" style="left:1377px;top:763px;width:113px;text-align:right">1.50</div><div class="a td" style="left:1497px;top:763px;width:113px;text-align:right">66.67%</div><div class="a row" style="top:796px;background:#fff"></div><div class="a tcb" style="left:232px;top:804px"></div><div class="a td" style="left:255px;top:796px;width:45px;text-align:center">19</div><div class="a td" style="left:300px;top:796px;width:82px;text-align:right">1</div><div class="a td" style="left:390px;top:796px;width:112px;text-align:right">0.00</div><div class="a td" style="left:510px;top:796px;width:112px;text-align:right">0.00</div><div class="a td" style="left:630px;top:796px;width:112px;text-align:right">0.00</div><div class="a td" style="left:750px;top:796px;width:112px;text-align:right">0.00</div><div class="a td" style="left:870px;top:796px;width:112px;text-align:right">0.00</div><div class="a td" style="left:1251px;top:796px">是</div><div class="a td" style="left:1377px;top:796px;width:113px;text-align:right">18.00</div><div class="a td" style="left:1497px;top:796px;width:113px;text-align:right">100.00%</div><div class="a row" style="top:829px;background:#fafafa"></div><div class="a tcb" style="left:232px;top:837px"></div><div class="a td" style="left:255px;top:829px;width:45px;text-align:center">20</div><div class="a td" style="left:300px;top:829px;width:82px;text-align:right">0</div><div class="a td" style="left:390px;top:829px;width:112px;text-align:right">0.00</div><div class="a td" style="left:510px;top:829px;width:112px;text-align:right">0.00</div><div class="a td" style="left:630px;top:829px;width:112px;text-align:right">2.00</div><div class="a td" style="left:750px;top:829px;width:112px;text-align:right">2.00</div><div class="a td" style="left:870px;top:829px;width:112px;text-align:right">2.00</div><div class="a td" style="left:999px;top:829px">2025<span class="hy">-</span>02<span class="hy">-</span>24</div><div class="a td no" style="left:1251px;top:829px">否</div><div class="a td" style="left:1377px;top:829px;width:113px;text-align:right">0.00</div><div class="a td" style="left:1497px;top:829px;width:113px;text-align:right">0.00%</div><div class="a row" style="top:862px;background:#fff"></div><div class="a tcb" style="left:232px;top:870px"></div><div class="a td" style="left:255px;top:862px;width:45px;text-align:center">21</div><div class="a td" style="left:300px;top:862px;width:82px;text-align:right">1</div><div class="a td" style="left:390px;top:862px;width:112px;text-align:right">0.00</div><div class="a td" style="left:510px;top:862px;width:112px;text-align:right">0.00</div><div class="a td" style="left:630px;top:862px;width:112px;text-align:right">0.00</div><div class="a td" style="left:750px;top:862px;width:112px;text-align:right">0.00</div><div class="a td" style="left:870px;top:862px;width:112px;text-align:right">0.00</div><div class="a td no" style="left:1251px;top:862px">否</div><div class="a td" style="left:1377px;top:862px;width:113px;text-align:right">0.00</div><div class="a td" style="left:1497px;top:862px;width:113px;text-align:right">0.00%</div><div class="a row" style="top:895px;background:#fafafa"></div><div class="a tcb" style="left:232px;top:903px"></div><div class="a td" style="left:255px;top:895px;width:45px;text-align:center">22</div><div class="a td" style="left:300px;top:895px;width:82px;text-align:right">1</div><div class="a td" style="left:390px;top:895px;width:112px;text-align:right">0.00</div><div class="a td" style="left:510px;top:895px;width:112px;text-align:right">0.00</div><div class="a td" style="left:630px;top:895px;width:112px;text-align:right">0.00</div><div class="a td" style="left:750px;top:895px;width:112px;text-align:right">0.00</div><div class="a td" style="left:870px;top:895px;width:112px;text-align:right">0.00</div><div class="a td no" style="left:1251px;top:895px">否</div><div class="a td" style="left:1377px;top:895px;width:113px;text-align:right">0.00</div><div class="a td" style="left:1497px;top:895px;width:113px;text-align:right">0.00%</div><div class="a row" style="top:928px;background:#fff"></div><div class="a tcb" style="left:232px;top:936px"></div><div class="a td" style="left:255px;top:928px;width:45px;text-align:center">23</div><div class="a td" style="left:300px;top:928px;width:82px;text-align:right">1</div><div class="a td" style="left:390px;top:928px;width:112px;text-align:right">0.00</div><div class="a td" style="left:510px;top:928px;width:112px;text-align:right">0.00</div><div class="a td" style="left:630px;top:928px;width:112px;text-align:right">0.00</div><div class="a td" style="left:750px;top:928px;width:112px;text-align:right">0.00</div><div class="a td" style="left:870px;top:928px;width:112px;text-align:right">0.00</div><div class="a td" style="left:1251px;top:928px">是</div><div class="a td" style="left:1377px;top:928px;width:113px;text-align:right">0.00</div><div class="a td" style="left:1497px;top:928px;width:113px;text-align:right">0.00%</div>
<div class="a" style="left:300px;top:202px;width:1px;height:771px;background:#ebedf0"></div>
<div class="a" style="left:224px;top:961px;width:1643px;height:4px;background:#fafafa"></div>
<div class="a" style="left:1867px;top:202px;width:8px;height:88px;border-radius:4px;background:#b4b4b4"></div>
<div class="a" style="left:1875px;top:168px;width:1px;height:806px;background:#e5e6eb"></div>
<div class="a" style="left:1876px;top:202px;width:20px;height:772px;background:#f8f9fb"></div>
<div class="a" style="left:1876px;top:168px;width:20px;height:59px;background:#fff;border-bottom:1px solid #e5e6eb"></div>
<svg class="a" style="left:1881px;top:184px" width="10" height="9" viewBox="0 0 10 9" fill="none" stroke="#151515" stroke-width="1.3"><rect x=".7" y=".7" width="8.6" height="7.6"/><path d="M.7 2.5h8.6M3.7 2.5v5.8M6.3 2.5v5.8"/></svg>
<div class="a" style="left:1878px;top:196px;font-size:14px;line-height:18px;color:#151515">列</div>
<div class="a" style="left:837px;top:965px;width:651px;height:8px;border-radius:4px;background:#b4b4b4"></div>
<div class="a" style="left:1240px;top:171px;width:142px;height:796px;border:4px solid #e8402a;border-radius:5px"></div>
<div class="a" style="left:737px;top:119px;width:104px;height:41px;border:4px solid #e8402a;border-radius:6px"></div>
<div class="a" style="left:1890px;top:368px;width:29px;height:120px;background:#b3c4fb;border-radius:6px 0 0 6px"><svg class="a" style="left:8px;top:10px" width="15" height="13" viewBox="0 0 15 13" fill="none" stroke="#fff" stroke-width="1.3" stroke-linejoin="round"><path d="M1 1h12.5v8.5H8.8l-1.5 1.8-1.5-1.8H1z"/><path d="M4.3 4h4.6M4.3 6.5h2.6" stroke-linecap="round"/></svg><div class="a" style="left:7px;top:27px;width:14px;font-size:13px;line-height:22px;color:#fff;text-align:center">帮助中心</div></div>
<div class="a" style="left:1890px;top:498px;width:29px;height:120px;background:#fff;border-radius:6px 0 0 6px;box-shadow:0 0 6px rgba(0,0,0,.12)"><svg class="a" style="left:6px;top:30px" width="18" height="17" viewBox="0 0 18 17" fill="none" stroke="#51555f" stroke-width="1.4" stroke-linecap="round"><path d="M2.6 7.5 A6.4 6.4 0 0 1 15.4 7.5"/><rect x="1.3" y="6.5" width="2.4" height="5.5" rx="1.1"/><rect x="14.3" y="6.5" width="2.4" height="5.5" rx="1.1"/><path d="M15.5 12 Q15.2 15.6 10.5 15.8"/><path d="M6.8 11.6 Q9 13 11.2 11.6"/></svg><div class="a" style="left:7px;top:48px;width:14px;font-size:14px;line-height:22px;color:#333;text-align:center">客服</div></div></body></html>
